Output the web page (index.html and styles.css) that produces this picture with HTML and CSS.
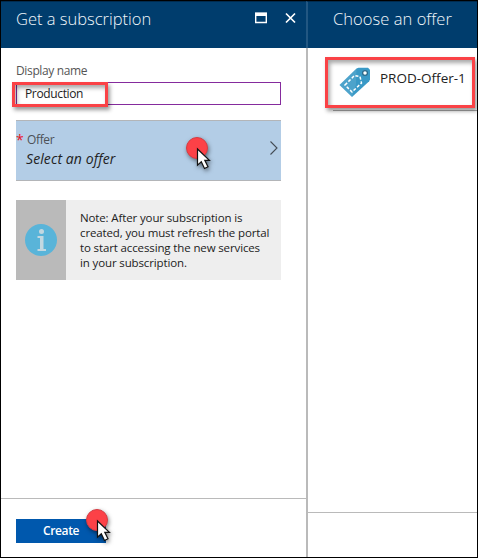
FILE: index.html
```html
<!DOCTYPE html>
<html lang="en">
<head>
<meta charset="utf-8">
<title>Get a subscription</title>
<link rel="stylesheet" href="styles.css">
</head>
<body>
<main class="portal">
  <section class="blade blade-main">
    <header class="blade-header">
      <h1>Get a subscription</h1>
      <svg class="window-icons" width="46" height="16" viewBox="0 0 46 16">
        <path d="M3.700 3.500h10.600v9h-10.600z" fill="none" stroke="#fff" stroke-width="1.400"/>
        <path d="M3 2.500h12v3.500H3z" fill="#fff"/>
        <path d="M34 3.500l9 9M43 3.500l-9 9" stroke="#fff" stroke-width="1.700"/>
      </svg>
    </header>
    <div class="blade-body">
      <label class="label">Display name</label>
      <div class="field">Production<div class="mark mark-field"></div></div>
      <div class="selector">
        <div class="selector-label"><span class="required">*</span>Offer</div>
        <div class="selector-value">Select an offer</div>
        <svg class="chevron" width="10" height="16" viewBox="0 0 10 16"><path d="M1.500 1.500l6.500 6.500-6.500 6.500" fill="none" stroke="#444c55" stroke-width="1.100"/></svg>
        <svg class="click click-offer" width="34" height="42" viewBox="0 0 34 42"><circle cx="14" cy="14" r="10.500" fill="#fc4147" stroke="#d63c43"/><path d="M14.500 15v16.200l3.800-3.400 3.200 6.700 3.500-1.800-3.200-6.400h4.600z" fill="#fff" stroke="#111" stroke-width="1.200"/></svg>
      </div>
      <div class="note">
        <div class="note-icon"><svg width="32" height="32" viewBox="0 0 32 32"><circle cx="16" cy="16" r="16" fill="#59b4d9"/><circle cx="16.500" cy="7.500" r="2.500" fill="#c3d8e1"/><path d="M12.500 12H18.500v13h2.500v2h-8.500v-2h2.500V14h-2.500z" fill="#c3d8e1"/></svg></div>
        <p>Note: After your subscription is<br>created, you must refresh the portal<br>to start accessing the new services<br>in your subscription.</p>
      </div>
    </div>
    <footer class="blade-footer">
      <button class="create">Create
        <svg class="click click-create" width="34" height="42" viewBox="0 0 34 42"><circle cx="14" cy="14" r="10.500" fill="#fc4147" stroke="#d63c43"/><path d="M14.500 15v16.200l3.800-3.400 3.200 6.700 3.500-1.800-3.200-6.400h4.600z" fill="#fff" stroke="#111" stroke-width="1.200"/></svg>
      </button>
    </footer>
  </section>
  <section class="blade blade-offers">
    <header class="blade-header"><h1>Choose an offer</h1></header>
    <div class="blade-body">
      <div class="offer">
        <svg class="tag" width="32" height="32" viewBox="0 0 32 32">
          <path d="M.5 19L17.500 2.500l2-.7H29l2 2v9.500l-.8 2L13 31z" fill="#3999c6"/>
          <path d="M17 18.500L13 31 .5 19 17.500 2.500z" fill="#fff" opacity=".1"/>
          <path d="M6 19L15.500 9.500l5.500 1L22.500 17 13 26z" fill="none" stroke="#fff" stroke-width="1.500" stroke-dasharray="3 1.800"/>
          <circle cx="26" cy="7" r="2.400" fill="#fff" stroke="#2b6a8c" stroke-width="1.300"/>
        </svg>
        <span class="offer-name">PROD-Offer-1</span>
        <div class="mark mark-offer"></div>
      </div>
    </div>
    <footer class="blade-footer"></footer>
  </section>
</main>
</body>
</html>
```
FILE: styles.css
```css
* { box-sizing: border-box; }
body { margin: 0; font-family: "Open Sans", "Noto Sans", sans-serif; font-size: 12px; letter-spacing: -.36px; color: #222; white-space: nowrap; }
.portal { display: flex; width: 478px; height: 558px; border: 1px solid #000; background: #fff; overflow: hidden; }
.blade { display: flex; flex-direction: column; }
.blade-main { width: 305px; }
.blade-offers { flex: 1; border-left: 2px solid #bababa; }
.blade-header { display: flex; justify-content: space-between; height: 47px; padding: 5px 8px 0 15px; background: #003d6d; border-top: 1px solid #002b4e; }
.blade-offers .blade-header { margin-left: -2px; padding-left: 25px; border-left: 2px solid #225782; }
h1 { margin: 0; font-size: 16.5px; line-height: 23px; font-weight: 300; letter-spacing: 0; color: #f2f7fb; }
.blade-offers h1 { letter-spacing: .05px; }
.window-icons { margin-top: 3px; }
.blade-body { flex: 1; padding: 0 25px 0 15px; }
.label { display: block; height: 34px; padding-top: 15px; line-height: 16px; color: #555; }
.field { position: relative; height: 23px; padding-left: 8px; border: 1px solid #852b9d; line-height: 22px; }
.mark { position: absolute; border: 3px solid #fa4246; box-shadow: 2px 3px 4px rgba(0,0,0,.4), inset 2px 3px 4px rgba(0,0,0,.35); }
.mark-field { left: -5px; top: -1px; width: 96px; height: 25px; }
.selector { position: relative; height: 61px; margin-top: 15px; padding: 10px 0 0 11px; background: #b3cde6; border-top: 1px solid #b3b5b8; border-bottom: 1px solid #b3b5b8; }
.selector-label { position: relative; line-height: 17px; color: #4c5157; }
.required { position: absolute; left: -11px; top: 0; color: #e81123; font-size: 14px; }
.selector-value { margin-left: -1px; font-size: 14px; font-style: italic; line-height: 21px; letter-spacing: .1px; }
.chevron { position: absolute; left: 253px; top: 19px; }
.click { position: absolute; filter: drop-shadow(1px 2px 2px rgba(0,0,0,.5)); }
.click-offer { left: 167px; top: 13px; }
.note { display: flex; height: 80px; margin-top: 19px; background: #eee; }
.note-icon { display: grid; place-items: center; width: 50px; background: #bababa; }
.note p { margin: 10px 0 0 14px; font-size: 11.5px; line-height: 15px; letter-spacing: -.13px; }
.blade-footer { height: 59px; padding: 20px 15px 0; border-top: 1px solid #bababa; }
.blade-offers .blade-footer { height: 45px; }
.create { position: relative; display: block; width: 90px; height: 24px; padding: 0; border: 0; background: #0058ad; color: #fff; font: 600 12px/24px "Open Sans", sans-serif; letter-spacing: -.35px; }
.click-create { left: 67px; top: -13px; }
.blade-offers .blade-body { padding: 9px 0 0 25px; }
.offer { position: relative; display: flex; height: 54px; border-bottom: 1px solid #aaa; font-size: 13.5px; line-height: 18px; letter-spacing: 0; }
.tag { margin: 9px 0 0 6px; }
.offer-name { margin: 12px 0 0 9px; }
.mark-offer { left: -8px; top: 0; width: 150px; height: 51px; }
```
